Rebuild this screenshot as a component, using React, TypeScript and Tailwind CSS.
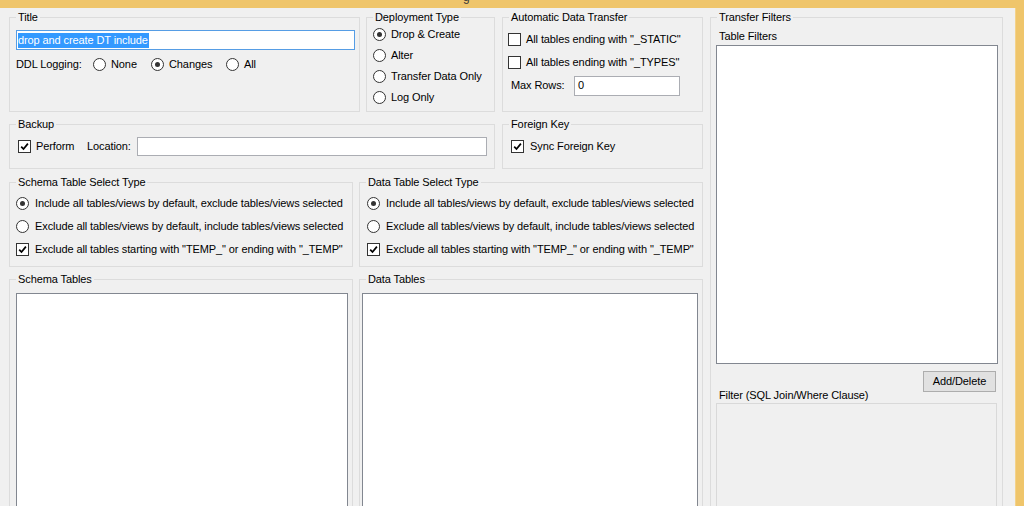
import React from "react";

function Group(props: { label: string; className?: string; children?: React.ReactNode }) {
  return (
    <fieldset className={`border border-[#dcdcdc] shrink-0 min-w-0 ${props.className ?? ""}`}>
      <legend className="ml-[6px] px-[2px] leading-[13px]">{props.label}</legend>
      {props.children}
    </fieldset>
  );
}

function Radio(props: { checked?: boolean }) {
  return (
    <span className="w-[13px] h-[13px] rounded-full border border-[#333333] bg-white flex items-center justify-center shrink-0">
      {props.checked && <span className="w-[5px] h-[5px] rounded-full bg-[#333333]" />}
    </span>
  );
}

function Check(props: { checked?: boolean }) {
  return (
    <span className="w-[13px] h-[13px] border border-[#333333] bg-white flex items-center justify-center shrink-0">
      {props.checked && (
        <svg width="9" height="9" viewBox="0 0 9 9">
          <path d="M1.2 4.6 L3.5 7 L7.9 1.6" stroke="#000" strokeWidth="1.7" fill="none" />
        </svg>
      )}
    </span>
  );
}

function Option(props: { kind: "radio" | "check"; checked?: boolean; label: string; className?: string }) {
  return (
    <div className={`flex items-center gap-[5px] ${props.className ?? ""}`}>
      {props.kind === "radio" ? <Radio checked={props.checked} /> : <Check checked={props.checked} />}
      <span className="leading-[13px] whitespace-nowrap">{props.label}</span>
    </div>
  );
}

export default function App() {
  return (
    <div className="w-[1024px] h-[506px] bg-[#f0f0f0] overflow-hidden flex flex-col text-[11px] tracking-[-0.1px] text-black font-['Liberation_Sans',Arial,sans-serif]">
      <div className="h-[8px] bg-[#efc56b] shrink-0 flex overflow-hidden pl-[463px]">
        <span className="text-[12px] leading-[12px] mt-[-9px] text-[#3a3a3a]">g</span>
      </div>

      <div className="flex flex-1 min-h-0">
        <div className="flex-1 flex pl-[9px] pt-[3px] gap-[7px] overflow-hidden">
          {/* left column */}
          <div className="w-[694px] flex flex-col shrink-0">
            <div className="flex h-[101px] shrink-0">
              <Group label="Title" className="w-[351px] h-[101px]">
                <div className="mt-[6px] ml-[6px] w-[339px] h-[20px] border border-[#569de5] bg-white flex items-center pl-[1px]">
                  <span className="bg-[#3399ff] text-white leading-[15px] pr-[1px]">drop and create DT include</span>
                </div>
                <div className="mt-[8px] ml-[6px] flex items-center h-[13px]">
                  <span className="w-[77px] leading-[13px]">DDL Logging:</span>
                  <Option kind="radio" label="None" className="w-[58px]" />
                  <Option kind="radio" checked label="Changes" className="w-[75px]" />
                  <Option kind="radio" label="All" />
                </div>
              </Group>
              <Group label="Deployment Type" className="w-[129px] h-[101px] ml-[6px]">
                {[
                  ["Drop & Create", true],
                  ["Alter", false],
                  ["Transfer Data Only", false],
                  ["Log Only", false],
                ].map(([l, c]) => (
                  <Option key={l as string} kind="radio" checked={c as boolean} label={l as string} className="h-[21px] pl-[6px]" />
                ))}
              </Group>
              <Group label="Automatic Data Transfer" className="w-[201px] h-[101px] ml-[7px]">
                <div className="mt-[4px]">
                  <Option kind="check" label={'All tables ending with "_STATIC"'} className="h-[23px] pl-[5px]" />
                  <Option kind="check" label={'All tables ending with "_TYPES"'} className="h-[23px] pl-[5px]" />
                  <div className="h-[23px] flex items-center pl-[8px]">
                    <span className="w-[63px] leading-[13px]">Max Rows:</span>
                    <div className="w-[106px] h-[20px] border border-[#abadb3] bg-white flex items-center pl-[3px]">0</div>
                  </div>
                </div>
              </Group>
            </div>

            <div className="flex h-[51px] mt-[6px] shrink-0">
              <Group label="Backup" className="w-[486px] h-[51px]">
                <div className="mt-[6px] pl-[8px] flex items-center h-[19px]">
                  <Check checked />
                  <span className="ml-[5px] w-[51px] leading-[13px]">Perform</span>
                  <span className="w-[50px] leading-[13px]">Location:</span>
                  <div className="w-[350px] h-[19px] border border-[#abadb3] bg-white" />
                </div>
              </Group>
              <Group label="Foreign Key" className="w-[201px] h-[51px] ml-[7px]">
                <Option kind="check" checked label="Sync Foreign Key" className="mt-[6px] pl-[8px] h-[19px] gap-[6px]" />
              </Group>
            </div>

            <div className="flex h-[91px] mt-[7px] shrink-0 gap-[6px]">
              <Group label="Schema Table Select Type" className="w-[344px] h-[91px]">
                <div className="mt-[3px]">
                  <Option kind="radio" checked label="Include all tables/views by default, exclude tables/views selected" className="h-[23px] pl-[6px] gap-[6px]" />
                  <Option kind="radio" label="Exclude all tables/views by default, include tables/views selected" className="h-[23px] pl-[6px] gap-[6px]" />
                  <Option kind="check" checked label={'Exclude all tables starting with "TEMP_" or ending with "_TEMP"'} className="h-[23px] pl-[6px] gap-[6px]" />
                </div>
              </Group>
              <Group label="Data Table Select Type" className="w-[344px] h-[91px]">
                <div className="mt-[3px]">
                  <Option kind="radio" checked label="Include all tables/views by default, exclude tables/views selected" className="h-[23px] pl-[7px] gap-[6px]" />
                  <Option kind="radio" label="Exclude all tables/views by default, include tables/views selected" className="h-[23px] pl-[7px] gap-[6px]" />
                  <Option kind="check" checked label={'Exclude all tables starting with "TEMP_" or ending with "_TEMP"'} className="h-[23px] pl-[7px] gap-[6px]" />
                </div>
              </Group>
            </div>

            <div className="flex h-[260px] mt-[6px] shrink-0 gap-[6px]">
              <Group label="Schema Tables" className="w-[344px] h-[260px]">
                <div className="mt-[7px] ml-[6px] w-[332px] h-[300px] border border-[#828790] bg-white" />
              </Group>
              <Group label="Data Tables" className="w-[344px] h-[260px]">
                <div className="mt-[7px] ml-[2px] w-[336px] h-[300px] border border-[#828790] bg-white" />
              </Group>
            </div>
          </div>

          {/* right column */}
          <Group label="Transfer Filters" className="w-[293px] h-[560px]">
            <div className="mt-[6px] ml-[8px] leading-[13px]">Table Filters</div>
            <div className="mt-[2px] ml-[5px] w-[282px] h-[319px] border border-[#828790] bg-white" />
            <div className="mt-[7px] ml-[8px] mr-[6px] h-[31px] flex justify-between">
              <span className="self-end leading-[13px]">Filter (SQL Join/Where Clause)</span>
              <button className="self-start w-[73px] h-[21px] border border-[#adadad] bg-[#e1e1e1] leading-[13px]">Add/Delete</button>
            </div>
            <div className="mt-[1px] ml-[5px] w-[281px] h-[200px] border border-[#d9d9d9] bg-[#f0f0f0]" />
          </Group>
        </div>
        <div className="w-[9px] shrink-0 bg-[#efc56b] border-l border-[#f4d28a]" />
      </div>
    </div>
  );
}
